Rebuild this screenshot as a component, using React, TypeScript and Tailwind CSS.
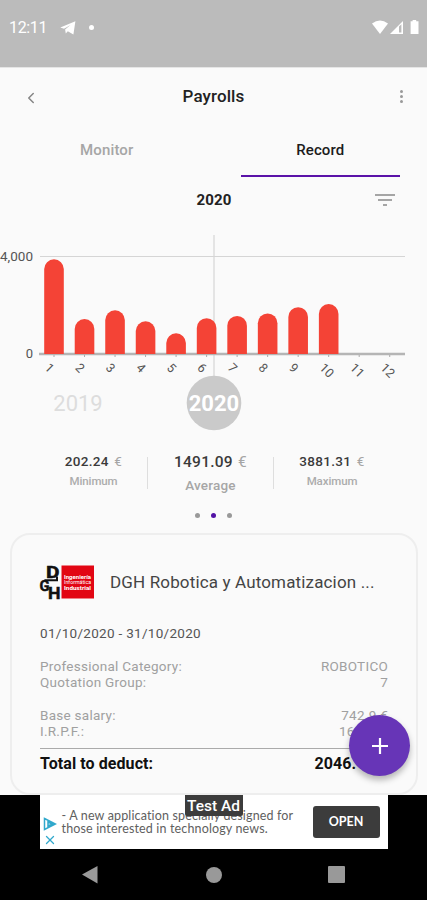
import React from 'react';
import { ChevronLeft, X } from 'lucide-react';

const salaries = [3881, 1430, 1790, 1340, 850, 1470, 1560, 1660, 1920, 2046, 0, 0];

const stats = [
  { label: 'Minimum', value: '202.24' },
  { label: 'Average', value: '1491.09', active: true },
  { label: 'Maximum', value: '3881.31' },
];

const StatusBar: React.FC = () => (
  <div className="flex h-[67px] shrink-0 items-start justify-between bg-[#bbbbbb] pl-[9px] pr-[7px] pt-[18px] text-white">
    <div className="flex h-5 items-center">
      <span className="w-[38px] text-[16px] leading-5 tracking-[-0.35px]">12:11</span>
      <svg width="16" height="14" viewBox="0 0 16 14" className="ml-[13px]" fill="currentColor">
        <path d="M0.3 6.6 15.4 0.2 13.4 13.6 7.8 10.2 5.8 12.6 5.1 8.4 10.5 4 4 7.7Z" />
      </svg>
      <span className="mb-[2px] ml-[13px] size-[5px] rounded-full bg-white" />
    </div>
    <svg width="49" height="16" viewBox="0 0 49 16" className="mt-px" fill="currentColor">
      <path d="M1 4.6Q9 -1.8 17 4.6L9 15Z" />
      <path d="M19 15 32 2V15Z" />
      <path d="M28 7.6 30.4 5.2V13.6H28Z" fill="#bbbbbb" />
      <path d="M39.6 2.3H41.6V1H45.2V2.3H47.5V15H39.6Z" />
    </svg>
  </div>
);

const Header: React.FC = () => (
  <header className="flex h-[57px] items-center justify-between pl-[22px] pr-5">
    <button className="pt-[2px] text-[#858585]">
      <ChevronLeft size={18} strokeWidth={2} />
    </button>
    <h1 className="mr-[8px] pb-px text-[17px] font-medium leading-5 tracking-[0.1px] text-[#222222]">Payrolls</h1>
    <button className="flex w-3 flex-col items-center gap-[2px]">
      <span className="size-[3px] rounded-full bg-[#999999]" />
      <span className="size-[3px] rounded-full bg-[#999999]" />
      <span className="size-[3px] rounded-full bg-[#999999]" />
    </button>
  </header>
);

const Tabs: React.FC = () => (
  <div className="flex h-[52px] text-[15px] font-medium leading-5">
    <div className="flex flex-1 justify-center pt-[15px] tracking-[0.15px] text-[#a6a6a6]">Monitor</div>
    <div className="flex flex-1 flex-col items-center justify-between pt-[15px] text-[#1c1c1c]">
      <span className="tracking-[0.1px]">Record</span>
      <span className="h-[2px] w-[159px] bg-[#5a12a8]" />
    </div>
  </div>
);

const Chart: React.FC = () => (
  <svg width="427" height="215" viewBox="0 225 427 215" className="block">
    <path d="M40 256.5H405" stroke="#d5d5d5" />
    <path d="M214 235V376" stroke="#d6d6d6" strokeWidth="1.2" />
    <g fontSize="13" fill="#555555" textAnchor="end">
      <text x="33" y="260.5" textLength="33" lengthAdjust="spacingAndGlyphs">4,000</text>
      <text x="33" y="358">0</text>
    </g>
    <path d="M39 354H405" stroke="#b5b5b5" strokeWidth="2.4" />
    {salaries.map((amount, i) => {
      const x = 54 + i * 30.52;
      const top = 354 - (amount * 97.6) / 4000;
      return (
        <g key={i}>
          <path d={`M${x} 355V357`} stroke="#aaaaaa" />
          {amount > 0 && (
            <path
              d={`M${x - 9.8} 354V${top + 9.8}A9.8 9.8 0 0 1 ${x + 9.8} ${top + 9.8}V354Z`}
              fill="#f44336"
            />
          )}
          <text
            transform={`translate(${x - 10} 368.5) rotate(45)`}
            fontSize="12.5"
            fill="#555555"
          >
            {i + 1}
          </text>
        </g>
      );
    })}
    <circle cx="214" cy="403" r="27.3" fill="#cacaca" />
    <text x="78" y="411" fontSize="22" fill="#dddddd" textAnchor="middle">2019</text>
    <text x="214" y="411" fontSize="22" fontWeight="700" fill="#ffffff" textAnchor="middle">2020</text>
  </svg>
);

const Stats: React.FC = () => (
  <div className="flex h-[60px] items-start pl-10 pt-3">
    {stats.map((stat, i) => (
      <React.Fragment key={stat.label}>
        {i > 0 && <span className="mt-[5px] h-8 w-px bg-[#dedede]" />}
        {stat.active ? (
          <div className="w-[125px] text-center">
            <div className="whitespace-nowrap text-[15.5px] font-medium leading-5 tracking-[0.25px] text-[#3a3a3a]">
              {stat.value} <span className="ml-px font-normal text-[#a5a5a5]">€</span>
            </div>
            <div className="mt-[3px] text-[13.5px] font-medium leading-5 tracking-[0.2px] text-[#a6a6a6]">{stat.label}</div>
          </div>
        ) : (
          <div className={i === 0 ? 'w-[107px] text-center' : 'w-[116px] text-center'}>
            <div className="text-[13.5px] font-medium leading-[18px] tracking-[0.3px] text-[#3a3a3a]">
              {stat.value} <span className="ml-[2px] font-normal text-[#a5a5a5]">€</span>
            </div>
            <div className="mt-[2px] text-[11.5px] font-medium leading-[18px] tracking-[-0.1px] text-[#acacac]">{stat.label}</div>
          </div>
        )}
      </React.Fragment>
    ))}
  </div>
);

const Logo: React.FC = () => (
  <svg width="55" height="34" viewBox="0 0 55 34" className="shrink-0 overflow-visible">
    <g fontWeight="700" fill="#111111" stroke="#111111" strokeWidth="0.5">
      <text x="6" y="12.6" fontSize="16.5" textLength="13.5" lengthAdjust="spacingAndGlyphs">D</text>
      <text x="-0.5" y="26" fontSize="15.5" textLength="10" lengthAdjust="spacingAndGlyphs">G</text>
      <text x="8" y="33.5" fontSize="17" textLength="12.5" lengthAdjust="spacingAndGlyphs">H</text>
      <path d="M17 11.5V15.2H4.5" fill="none" strokeWidth="2" />
    </g>
    <rect x="21.5" y="0.5" width="32.5" height="33" fill="#e20613" />
    <g fontSize="5.8" fontWeight="700" fill="#ffffff">
      <text x="24" y="13.5" textLength="27" lengthAdjust="spacingAndGlyphs">Ingeniería</text>
      <text x="24" y="19" fontWeight="400" textLength="27" lengthAdjust="spacingAndGlyphs">Informática</text>
      <text x="24" y="24.5" textLength="27" lengthAdjust="spacingAndGlyphs">Industrial</text>
    </g>
  </svg>
);

const Row: React.FC<{ label: string; value: string }> = ({ label, value }) => (
  <div className="flex justify-between">
    <span>{label}</span>
    <span>{value}</span>
  </div>
);

const PayrollCard: React.FC = () => (
  <div className="relative ml-[10px] mr-[9px] h-[262px] rounded-[20px] border-2 border-[#eeeeee] px-7 pt-[30px]">
    <div className="flex items-center">
      <Logo />
      <h2 className="ml-[15px] whitespace-nowrap text-[17px] leading-5 tracking-[0.15px] text-[#444444]">
        DGH Robotica y Automatizacion ...
      </h2>
    </div>
    <div className="mt-6 text-[13.5px] leading-5 tracking-[0.3px] text-[#555555]">01/10/2020 - 31/10/2020</div>
    <div className="mt-[15px] text-[13.5px] leading-[16.3px] tracking-[0.27px] text-[#a0a0a0]">
      <Row label="Professional Category:" value="ROBOTICO" />
      <Row label="Quotation Group:" value="7" />
      <div className="mt-4">
        <Row label="Base salary:" value="742.9 €" />
        <Row label="I.R.P.F.:" value="16.75 %" />
      </div>
    </div>
    <div className="mt-[9px] flex justify-between border-t border-[#aaaaaa] pt-[5px] text-[16px] font-bold leading-5 tracking-[0.08px] text-[#111111]">
      <span>Total to deduct:</span>
      <span>2046.17 €</span>
    </div>
    <button className="absolute bottom-[17px] right-[6px] flex size-[61px] items-center justify-center rounded-full bg-[#6735b7] shadow-[0_4px_6px_rgba(0,0,0,0.28)]">
      <svg width="16" height="16" viewBox="0 0 16 16" stroke="#ffffff" strokeWidth="2.2">
        <path d="M8 0V16M0 8H16" />
      </svg>
    </button>
  </div>
);

const AdBanner: React.FC = () => (
  <div className="relative mx-auto flex h-[54px] w-[348px] items-center bg-white pl-[3px] pr-2 font-['Lato',sans-serif]">
    <div className="flex w-[15px] flex-col items-center gap-[2px] self-end pb-[2px] text-[#31a8cc]">
      <svg width="14" height="14" viewBox="0 0 14 14" fill="none" stroke="currentColor" strokeWidth="1.5">
        <path d="M1.5 1.5 12.5 7 1.5 12.5ZM5 5 9 7 5 9Z" />
      </svg>
      <X size={14} strokeWidth={2.2} />
    </div>
    <p className="ml-1 whitespace-nowrap pb-px text-[12.5px] leading-[13px] tracking-[0.15px] text-[#606060]">
      - A new application specially designed for
      <br />
      those interested in technology news.
    </p>
    <button className="ml-auto h-8 w-[67px] rounded-[3px] bg-[#3c3c3c] text-[12.5px] font-bold text-white">OPEN</button>
    <span className="absolute left-[145px] top-0 h-[21px] w-[58px] rounded-b-[2px] bg-[#3c3c3c] text-center font-['Roboto',sans-serif] text-[15.5px] font-medium leading-[22px] text-white">
      Test Ad
    </span>
  </div>
);

const NavBar: React.FC = () => (
  <div className="flex flex-1 items-center justify-between pl-[81px] pr-[82px]">
    <svg width="17" height="19" viewBox="0 0 17 19" fill="#999999">
      <path d="M1 9.5 16.5 1V18.5Z" />
    </svg>
    <span className="ml-px size-4 rounded-full bg-[#999999]" />
    <span className="size-[17px] rounded-[1px] bg-[#999999]" />
  </div>
);

export default function App() {
  return (
    <div className="flex h-[900px] w-[427px] flex-col overflow-hidden bg-black font-['Roboto',sans-serif]">
      <StatusBar />
      <main className="h-[728px] shrink-0 border-t border-[#e5e5e5] bg-[#fafafa]">
        <Header />
        <Tabs />
        <div className="flex h-12 items-center pb-[2px]">
          <span className="ml-[184px] w-[60px] text-center text-[15px] font-bold leading-5 tracking-[0.2px] text-[#222222]">2020</span>
          <div className="ml-[131px] flex w-5 flex-col items-center gap-[3px]">
            <span className="h-[2px] w-5 bg-[#a5a5a5]" />
            <span className="h-[2px] w-[14px] bg-[#a5a5a5]" />
            <span className="h-[2px] w-1 bg-[#a5a5a5]" />
          </div>
        </div>
        <Chart />
        <Stats />
        <div className="flex h-[33px] items-center justify-center gap-[11px] pb-[2px]">
          <span className="size-[5px] rounded-full bg-[#999999]" />
          <span className="size-[5px] rounded-full bg-[#5212a5]" />
          <span className="size-[5px] rounded-full bg-[#999999]" />
        </div>
        <PayrollCard />
      </main>
      <AdBanner />
      <NavBar />
    </div>
  );
}
